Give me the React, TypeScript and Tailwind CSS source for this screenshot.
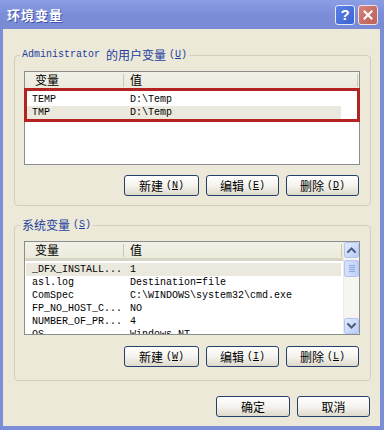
import React from 'react';

const mono = "font-['Liberation_Mono',monospace] text-[10px]";
const cjk = "font-['Noto_Sans_CJK_SC',sans-serif] text-[12px]";

type Row = { name: string; value: string; sel?: boolean };

const USER_ROWS: Row[] = [
  { name: 'TEMP', value: 'D:\\Temp' },
  { name: 'TMP', value: 'D:\\Temp', sel: true },
];

const SYS_ROWS: Row[] = [
  { name: '_DFX_INSTALL...', value: '1', sel: true },
  { name: 'asl.log', value: 'Destination=file' },
  { name: 'ComSpec', value: 'C:\\WINDOWS\\system32\\cmd.exe' },
  { name: 'FP_NO_HOST_C...', value: 'NO' },
  { name: 'NUMBER_OF_PR...', value: '4' },
  { name: 'OS', value: 'Windows_NT' },
];

function XpButton({ label, hot, w }: { label: string; hot?: string; w: string }) {
  return (
    <button className={`h-[21px] ${w} rounded-[3px] border border-[#26406c] bg-linear-to-b from-white via-[#f4f3ee] to-[#dedacb] flex items-center justify-center text-black leading-none`}>
      <span className={cjk}>{label}</span>
      {hot && <span className={`${mono} ml-[3px]`}>(<u>{hot}</u>)</span>}
    </button>
  );
}

function ListHeader() {
  return (
    <div className="flex h-[19px] shrink-0 bg-linear-to-b from-[#f2f1e8] to-[#ebeadb] border-b-[3px] border-[#d8d5c5]">
      <div className="w-[99px] pl-[10px] flex items-center justify-between">
        <span className={`${cjk} text-black`}>变量</span>
        <span className="w-px h-[13px] bg-[#c9c6b4]" />
      </div>
      <div className="flex-1 pl-[6px] flex items-center justify-between">
        <span className={`${cjk} text-black`}>值</span>
        <span className="w-px h-[13px] bg-[#c9c6b4] mr-[1px]" />
      </div>
    </div>
  );
}

function ListRows({ rows }: { rows: Row[] }) {
  return (
    <div className="flex flex-col pt-[2px] pl-[1px]">
      {rows.map((r) => (
        <div key={r.name} className={`flex h-[13px] w-[315px] items-center ${r.sel ? 'bg-[#ebe9dd]' : ''}`}>
          <span className={`${mono} w-[97px] pl-[6px] leading-[13px] text-black whitespace-nowrap`}>{r.name}</span>
          <span className={`${mono} pl-[7px] leading-[13px] text-black whitespace-nowrap`}>{r.value}</span>
        </div>
      ))}
    </div>
  );
}

function Chevron({ up }: { up?: boolean }) {
  return (
    <svg width="9" height="6" viewBox="0 0 9 6" fill="none" stroke="#4d6185" strokeWidth="2" strokeLinecap="square">
      <path d={up ? 'M1 5l3.5-3.5L8 5' : 'M1 1l3.5 3.5L8 1'} />
    </svg>
  );
}

function ScrollBtn({ up }: { up?: boolean }) {
  return (
    <div className="h-[16px] rounded-[2px] border border-[#b4c6f0] bg-linear-to-br from-[#e2ebfe] to-[#b9cdf8] flex items-center justify-center">
      <Chevron up={up} />
    </div>
  );
}

function Scrollbar() {
  return (
    <div className="w-[16px] flex flex-col bg-[#f6f5f0] border-l border-[#eeede5]">
      <ScrollBtn up />
      <div className="mt-[2px] h-[17px] rounded-[2px] border border-[#b4c6f0] bg-linear-to-r from-[#d6e2fd] to-[#bfd1f9] flex flex-col items-center justify-center gap-[1px]">
        <span className="w-[6px] h-px bg-[#8ea5dd]" />
        <span className="w-[6px] h-px bg-[#8ea5dd]" />
        <span className="w-[6px] h-px bg-[#8ea5dd]" />
        <span className="w-[6px] h-px bg-[#8ea5dd]" />
      </div>
      <div className="flex-1" />
      <ScrollBtn />
    </div>
  );
}

function Group({ title, hot, mt, children }: { title: React.ReactNode; hot: string; mt: string; children: React.ReactNode }) {
  return (
    <fieldset className={`${mt} ml-[11px] w-[357px] rounded-[4px] border border-[#d0d0bf] pl-[9px] pr-[10px]`}>
      <legend className="ml-[-4px] px-[2px] leading-[12px] text-[#1d3d9e] flex items-center">
        {title}
        <span className={`${mono} ml-[3px]`}>(<u>{hot}</u>)</span>
      </legend>
      {children}
    </fieldset>
  );
}

export default function App() {
  return (
    <div className="w-[384px] h-[430px] bg-[#7c8ed8] flex flex-col overflow-hidden">
      {/* title bar */}
      <div className="h-[29px] shrink-0 flex items-center px-[7px] bg-linear-to-b from-[#8c9ee3] via-[#7b8dd8] to-[#7a8bd6]">
        <span className="font-['Noto_Sans_CJK_SC',sans-serif] text-[13px] font-bold text-white tracking-[1px] [text-shadow:1px_1px_0_#3f52a8]">环境变量</span>
        <div className="ml-auto flex gap-[3px] mr-[-1px]">
          <div className="w-[20px] h-[20px] rounded-[3px] border border-[#e6ebfa] bg-linear-to-br from-[#5a80e6] to-[#3d62d2] flex items-center justify-center text-white font-bold text-[15px] font-['Liberation_Sans',sans-serif] leading-none">?</div>
          <div className="w-[20px] h-[20px] rounded-[3px] border border-[#f0e2e2] bg-linear-to-br from-[#d5827a] to-[#bd5f58] flex items-center justify-center">
            <svg width="10" height="10" viewBox="0 0 10 10" stroke="white" strokeWidth="2" strokeLinecap="square">
              <path d="M1.5 1.5l7 7M8.5 1.5l-7 7" />
            </svg>
          </div>
        </div>
      </div>

      {/* body */}
      <div className="flex-1 ml-[3px] mr-[4px] mb-[4px] bg-[#ece9d8] flex flex-col">
        <Group
          mt="mt-[20px]"
          hot="U"
          title={<><span className={mono}>Administrator</span><span className={`${cjk} ml-[6px]`}>的用户变量</span></>}
        >
          <div className="mt-[10px] relative w-[336px] h-[94px] border border-[#8b8d8f] bg-white flex flex-col">
            <ListHeader />
            <ListRows rows={USER_ROWS} />
            <div className="absolute left-[-1px] top-[16px] w-[336px] h-[34px] border-[3px] border-[#b52222]" />
          </div>
          <div className="mt-[10px] mb-[9px] flex justify-end gap-[7px] pr-[1px]">
            <XpButton label="新建" hot="N" w="w-[75px]" />
            <XpButton label="编辑" hot="E" w="w-[73px]" />
            <XpButton label="删除" hot="D" w="w-[73px]" />
          </div>
        </Group>

        <Group mt="mt-[13px]" hot="S" title={<span className={cjk}>系统变量</span>}>
          <div className="mt-[10px] w-[336px] h-[94px] border border-[#8b8d8f] bg-white flex overflow-hidden">
            <div className="flex-1 flex flex-col overflow-hidden">
              <ListHeader />
              <ListRows rows={SYS_ROWS} />
            </div>
            <Scrollbar />
          </div>
          <div className="mt-[11px] mb-[13px] flex justify-end gap-[7px] pr-[1px]">
            <XpButton label="新建" hot="W" w="w-[75px]" />
            <XpButton label="编辑" hot="I" w="w-[73px]" />
            <XpButton label="删除" hot="L" w="w-[73px]" />
          </div>
        </Group>

        <div className="mt-[15px] ml-[11px] w-[356px] flex justify-end gap-[7px]">
          <XpButton label="确定" w="w-[74px]" />
          <XpButton label="取消" w="w-[73px]" />
        </div>
      </div>
    </div>
  );
}
